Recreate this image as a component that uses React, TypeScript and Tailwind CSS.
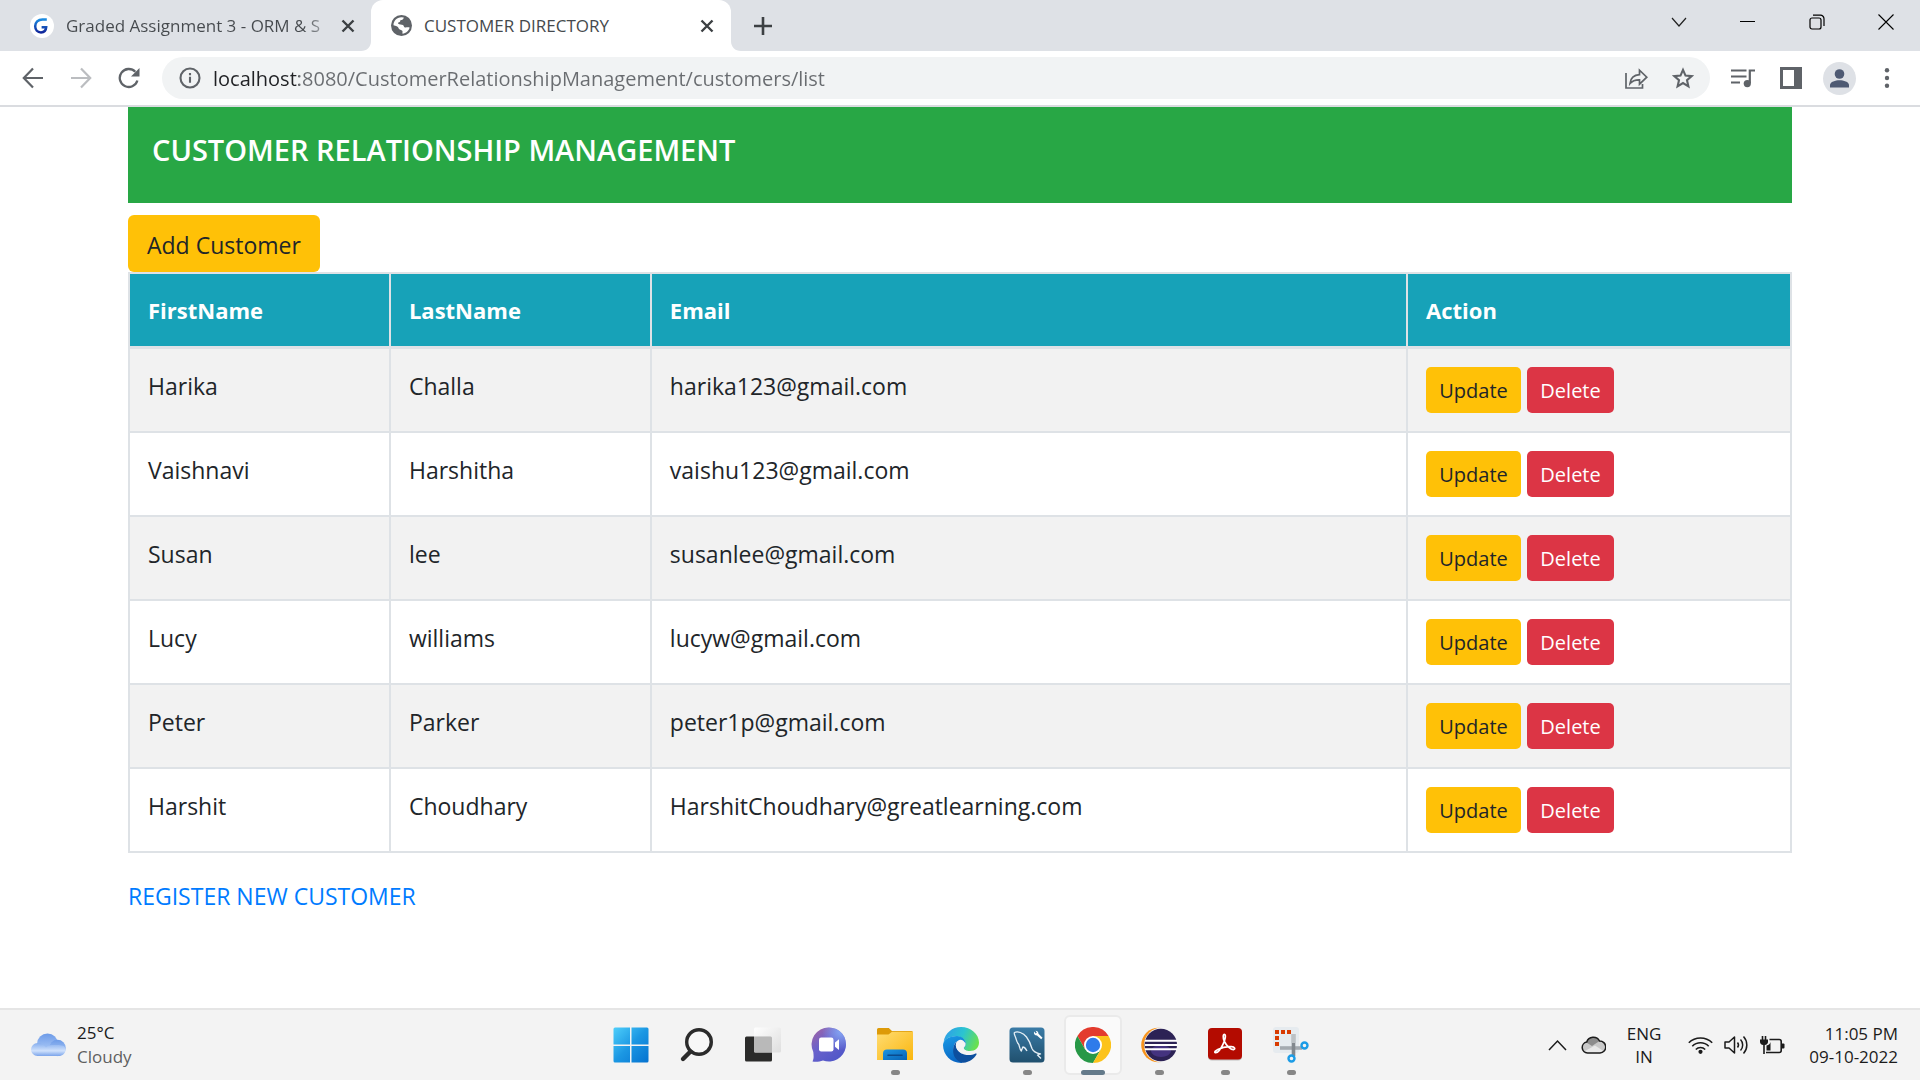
import type { ReactNode } from "react";

const customers = [
  { first: "Harika", last: "Challa", email: "harika123@gmail.com" },
  { first: "Vaishnavi", last: "Harshitha", email: "vaishu123@gmail.com" },
  { first: "Susan", last: "lee", email: "susanlee@gmail.com" },
  { first: "Lucy", last: "williams", email: "lucyw@gmail.com" },
  { first: "Peter", last: "Parker", email: "peter1p@gmail.com" },
  { first: "Harshit", last: "Choudhary", email: "HarshitChoudhary@greatlearning.com" },
];

function CloseX() {
  return (
    <svg className="size-4" viewBox="0 0 16 16" fill="none" stroke="#3c4043" strokeWidth="2.4">
      <path d="M2.5 2.5l11 11M13.5 2.5l-11 11" />
    </svg>
  );
}

function TabStrip() {
  return (
    <div className="flex h-[51px] bg-[#dee1e6]">
      <div className="flex w-[371px] items-center pl-[30px]">
        <svg className="size-6 shrink-0" viewBox="0 0 24 24">
          <circle cx="12" cy="12" r="12" fill="#fff" />
          <defs>
            <linearGradient id="gl" x1="0" y1="0" x2="0" y2="1">
              <stop offset="0" stopColor="#1b8ae0" />
              <stop offset="1" stopColor="#10269b" />
            </linearGradient>
          </defs>
          <path d="M16.8 5.4h-4.3C8 5.4 5.2 8.600 5.200 12.300c0 3.500 2.400 6.100 5.800 6.100 2.900 0 5-2 5.200-5.200h-4.600" fill="none" stroke="url(#gl)" strokeWidth="2.500" />
        </svg>
        <span className="ml-3 w-[264px] bg-[linear-gradient(90deg,#45494d_238px,transparent_270px)] bg-clip-text text-[17px] leading-6 whitespace-nowrap text-transparent">
          Graded Assignment 3 - ORM &amp; S
        </span>
        <button type="button" aria-label="Close tab" className="ml-[10px]">
          <CloseX />
        </button>
      </div>
      <div className="relative flex w-[360px] items-center rounded-t-[12px] bg-white pr-4 pl-5">
        <svg className="absolute bottom-0 -left-[10px] size-[10px]" viewBox="0 0 10 10">
          <path d="M10 0v10H0C6 10 10 6 10 0z" fill="#fff" />
        </svg>
        <svg className="absolute -right-[10px] bottom-0 size-[10px]" viewBox="0 0 10 10">
          <path d="M0 0v10h10C4 10 0 6 0 0z" fill="#fff" />
        </svg>
        <svg className="size-[21px]" viewBox="0 0 21 21">
          <circle cx="10.500" cy="10.500" r="10.500" fill="#5f6368" />
          <path d="M12.800 2.400c-.4 1.900-1.500 2.500-3.200 2.600-.6 1.300-.4 2.100-1.600 2.300-.9.200-1.200.8-.7 1.500.9 1.100 3.400.5 4.700 1.300 1.200.8.6 2.100 1.900 2.300 1.300.2 3.500-.4 4.700.2-.6 3.200-3.800 6-7 6.200-.6-1.200.6-2.400-.6-3.300-1.500-1-3.100-.8-3.500-2.600-.3-1.400-2.700-2.300-5-2.700C2.300 6.400 5.600 2.300 10.500 2.200z" fill="#fff" />
        </svg>
        <span className="ml-3 flex-1 text-[17px] leading-6 text-[#45494d]">CUSTOMER DIRECTORY</span>
        <button type="button" aria-label="Close tab">
          <CloseX />
        </button>
      </div>
      <button type="button" aria-label="New tab" className="ml-[22px]">
        <svg className="size-5" viewBox="0 0 20 20" stroke="#3c4043" strokeWidth="2.600">
          <path d="M10 1v18M1 10h18" />
        </svg>
      </button>
      <div className="ml-auto flex h-[43px] items-center">
        <button type="button" aria-label="Search tabs" className="flex w-[69px] justify-center">
          <svg className="h-4 w-4" viewBox="0 0 16 16" fill="none" stroke="#222" strokeWidth="1.200">
            <path d="M1 4l7 8 7-8" />
          </svg>
        </button>
        <button type="button" aria-label="Minimize" className="flex w-[69px] justify-center">
          <span className="h-px w-[15px] bg-black" />
        </button>
        <button type="button" aria-label="Restore" className="flex w-[69px] justify-center">
          <svg className="size-4" viewBox="0 0 16 16" fill="none" stroke="#000" strokeWidth="1.200">
            <rect x="1" y="4" width="11" height="11" rx="2" />
            <path d="M4 1.200h7.500a3.500 3.500 0 0 1 3.500 3.500V12" />
          </svg>
        </button>
        <button type="button" aria-label="Close window" className="flex w-[69px] justify-center">
          <svg className="size-4" viewBox="0 0 16 16" stroke="#000" strokeWidth="1.100">
            <path d="M.5.5l15 15M15.500.5l-15 15" />
          </svg>
        </button>
      </div>
    </div>
  );
}

function Toolbar() {
  return (
    <div className="flex h-14 items-center border-b-2 border-[#dadce0] bg-white pr-[23px] pl-[22px]">
      <button type="button" aria-label="Back">
        <svg className="size-[22px]" viewBox="0 0 22 22" fill="none" stroke="#5f6368" strokeWidth="2.200">
          <path d="M21 11H2M11 1.500L1.800 11l9.200 9.500" />
        </svg>
      </button>
      <button type="button" aria-label="Forward" className="ml-[26px]">
        <svg className="size-[22px]" viewBox="0 0 22 22" fill="none" stroke="#bbbdc0" strokeWidth="2.200">
          <path d="M1 11h19M11 1.500l9.200 9.500-9.200 9.500" />
        </svg>
      </button>
      <button type="button" aria-label="Reload" className="ml-[26px]">
        <svg className="size-[22px]" viewBox="0 0 22 22" fill="none" stroke="#5f6368" strokeWidth="2.300">
          <path d="M19.400 13.500A9 9 0 1 1 17.300 4.800" />
          <path d="M21.500 1v8.500H13z" fill="#5f6368" stroke="none" />
        </svg>
      </button>
      <div className="ml-[22px] flex h-[42px] flex-1 items-center rounded-full bg-[#f1f3f4] pr-4 pl-[17px]">
        <svg className="size-[22px] shrink-0" viewBox="0 0 22 22" fill="none" stroke="#5f6368" strokeWidth="2.100">
          <circle cx="11" cy="11" r="9.500" />
          <path d="M11 9.800v6M11 6v2.200" />
        </svg>
        <input
          type="text"
          aria-label="Address"
          defaultValue="localhost:8080/CustomerRelationshipManagement/customers/list"
          className="ml-3 min-w-0 flex-1 bg-[linear-gradient(90deg,#202124_86px,#696c70_86px)] bg-clip-text pt-0.5 text-xl text-transparent outline-none"
        />
        <button type="button" aria-label="Share this page">
          <svg className="size-6" viewBox="0 0 24 24" fill="none" stroke="#5f6368" strokeWidth="1.700">
            <path d="M2 7v15h16.500v-4" />
            <path d="M6 17.500c.6-5.500 4-8.500 9.500-8.800V4.200l7.300 7-7.300 7v-4.400c-4.300-.1-7.200 1-9.500 3.700z" />
          </svg>
        </button>
        <button type="button" aria-label="Bookmark this page" className="ml-6">
          <svg className="size-[22px]" viewBox="0 0 22 22" fill="none" stroke="#5f6368" strokeWidth="2.100">
            <path d="M11 2.800l2.500 5.800 6.200.5-4.700 4.100 1.400 6.200-5.400-3.300-5.400 3.300L7 13.200 2.300 9.100l6.200-.5z" />
          </svg>
        </button>
      </div>
      <button type="button" aria-label="Media controls" className="ml-[21px]">
        <svg className="h-5 w-6" viewBox="0 0 24 20" fill="none" stroke="#5f6368" strokeWidth="2.200">
          <path d="M0 2.500h15.500M0 8.500h15.500M0 14.500h9M18.800 15V2.500H24" />
          <circle cx="16.300" cy="15.600" r="3.600" fill="#5f6368" stroke="none" />
        </svg>
      </button>
      <button type="button" aria-label="Side panel" className="ml-[25px]">
        <svg className="size-[22px]" viewBox="0 0 22 22">
          <path d="M0 0h22v22H0z" fill="#5f6368" />
          <path d="M3 3h11v16H3z" fill="#fff" />
        </svg>
      </button>
      <button type="button" aria-label="Profile" className="ml-[21px]">
        <svg className="size-[33px]" viewBox="0 0 33 33">
          <circle cx="16.500" cy="16.500" r="16.500" fill="#dee1e6" />
          <circle cx="16.500" cy="12" r="4.800" fill="#4e5a73" />
          <path d="M7 25.500V23c0-3.200 5.500-4.800 9.500-4.800S26 19.800 26 23v2.500z" fill="#4e5a73" />
        </svg>
      </button>
      <button type="button" aria-label="Menu" className="ml-[21px]">
        <svg className="size-5" viewBox="0 0 20 20" fill="#5f6368">
          <circle cx="10" cy="2.200" r="2.200" />
          <circle cx="10" cy="10" r="2.200" />
          <circle cx="10" cy="17.800" r="2.200" />
        </svg>
      </button>
    </div>
  );
}

function CustomerTable() {
  return (
    <table className="w-full table-fixed border-collapse border-2 border-[#dee2e6] text-left text-[23px] leading-9 text-[#212529]">
      <colgroup>
        <col className="w-[15.7%]" />
        <col className="w-[15.7%]" />
        <col className="w-[45.5%]" />
        <col className="w-[23.1%]" />
      </colgroup>
      <thead className="bg-[#17a2b8] text-[22px] text-white">
        <tr>
          {["FirstName", "LastName", "Email", "Action"].map((h) => (
            <th key={h} scope="col" className="border-2 border-b-3 border-[#dee2e6] px-[18px] py-[18px] font-bold">
              {h}
            </th>
          ))}
        </tr>
      </thead>
      <tbody>
        {customers.map((c) => (
          <tr key={c.email} className="align-top odd:bg-[#f2f2f2]">
            <td className="border-2 border-[#dee2e6] px-[18px] pt-[19px]">{c.first}</td>
            <td className="border-2 border-[#dee2e6] px-[18px] pt-[19px]">{c.last}</td>
            <td className="border-2 border-[#dee2e6] px-[18px] pt-[19px]">{c.email}</td>
            <td className="border-2 border-[#dee2e6] p-[18px]">
              <div className="flex gap-1.5 text-xl">
                <button type="button" className="flex h-[46px] w-[95px] items-center justify-center rounded-[5px] bg-[#ffc107] pt-0.5">
                  Update
                </button>
                <button type="button" className="flex h-[46px] w-[87px] items-center justify-center rounded-[5px] bg-[#dc3545] pt-0.5 text-white">
                  Delete
                </button>
              </div>
            </td>
          </tr>
        ))}
      </tbody>
    </table>
  );
}

function StartIcon() {
  return (
    <svg className="size-9" viewBox="0 0 36 36">
      <defs>
        <linearGradient id="win" gradientUnits="userSpaceOnUse" x1="0" y1="0" x2="36" y2="36">
          <stop offset="0" stopColor="#4fd0fb" />
          <stop offset=".5" stopColor="#1b97e3" />
          <stop offset="1" stopColor="#0471cf" />
        </linearGradient>
      </defs>
      <path d="M2 .5h15v17H.5V2A1.500 1.500 0 0 1 2 .5zM18.500.5H34A1.500 1.500 0 0 1 35.500 2v15.500h-17zM.5 19h16.500v16.500H2A1.500 1.500 0 0 1 .5 34zM18.500 19h17v15a1.500 1.500 0 0 1-1.500 1.500H18.500z" fill="url(#win)" />
    </svg>
  );
}

function SearchIcon() {
  return (
    <svg className="size-9" viewBox="0 0 36 36" fill="none" stroke="#2b2b2b">
      <circle cx="20" cy="15" r="12.300" strokeWidth="3.400" fill="#f7f7f7" />
      <path d="M11.500 24.500L4 32" strokeWidth="4.400" strokeLinecap="round" />
    </svg>
  );
}

function TaskViewIcon() {
  return (
    <svg className="size-9" viewBox="0 0 36 36">
      <defs>
        <linearGradient id="tv" x1="0" y1="0" x2="1" y2="1">
          <stop offset="0" stopColor="#fff" stopOpacity=".95" />
          <stop offset="1" stopColor="#dcdcdc" stopOpacity=".9" />
        </linearGradient>
      </defs>
      <rect x="0" y="9.500" width="27" height="25" rx="1.500" fill="#2b2b2a" />
      <rect x="9" y=".5" width="27" height="25" rx="1.500" fill="url(#tv)" />
      <path d="M9 9.500h16.500a1.500 1.500 0 0 1 1.500 1.500v14.500H10.500A1.500 1.500 0 0 1 9 24z" fill="#b9b9b9" />
    </svg>
  );
}

function ChatIcon() {
  return (
    <svg className="size-9" viewBox="0 0 36 36">
      <defs>
        <linearGradient id="chat" x1="0" y1="0" x2=".8" y2="1">
          <stop offset="0" stopColor="#a8649f" />
          <stop offset=".45" stopColor="#6a62cb" />
          <stop offset="1" stopColor="#4d55c8" />
        </linearGradient>
        <radialGradient id="chatHi" cx=".85" cy=".12" r=".55">
          <stop offset="0" stopColor="#84a6f4" />
          <stop offset="1" stopColor="#84a6f4" stopOpacity="0" />
        </radialGradient>
      </defs>
      <path d="M18 .5a17 17 0 1 1-6 32.900C9 34.500 5 35.400 1.500 34.500c1.300-2.500 1.300-4.500.8-9.500A17 17 0 0 1 18 .5z" fill="url(#chat)" />
      <path d="M18 .5a17 17 0 1 1-6 32.900C9 34.500 5 35.400 1.500 34.500c1.300-2.500 1.300-4.500.8-9.500A17 17 0 0 1 18 .5z" fill="url(#chatHi)" />
      <rect x="8" y="10.500" width="14.500" height="14" rx="2.200" fill="#fff" />
      <path d="M24 15.500l4-3.200v10.600l-4-3.200z" fill="#fff" />
    </svg>
  );
}

function FolderIcon() {
  return (
    <svg className="size-9" viewBox="0 0 36 36">
      <defs>
        <linearGradient id="fold" x1="0" y1="0" x2="1" y2="1">
          <stop offset="0" stopColor="#ffdc72" />
          <stop offset="1" stopColor="#fab60e" />
        </linearGradient>
        <linearGradient id="foldB" x1="0" y1="0" x2="1" y2="1">
          <stop offset="0" stopColor="#1c95e2" />
          <stop offset="1" stopColor="#0762b5" />
        </linearGradient>
      </defs>
      <path d="M0 2.500A1.500 1.500 0 0 1 1.500 1h10.300L15 4h19.500A1.500 1.500 0 0 1 36 5.500V10H0z" fill="#dd9a08" />
      <path d="M0 7.500h11.500L15 4.800h21V33H0z" fill="url(#fold)" />
      <path d="M6 33v-6.500a4 4 0 0 1 4-4h16a4 4 0 0 1 4 4V33z" fill="url(#foldB)" />
      <path d="M11 28.200h14" stroke="#0b4a8c" strokeWidth="1.600" strokeLinecap="round" />
    </svg>
  );
}

function EdgeIcon() {
  return (
    <svg className="size-9" viewBox="0 0 36 36">
      <defs>
        <linearGradient id="e1" x1="0" y1=".3" x2="1" y2=".6">
          <stop offset="0" stopColor="#2f9fe8" />
          <stop offset=".5" stopColor="#2bc4d0" />
          <stop offset="1" stopColor="#6be14b" />
        </linearGradient>
        <linearGradient id="e2" x1="0" y1="0" x2=".3" y2="1">
          <stop offset="0" stopColor="#1a9be6" />
          <stop offset="1" stopColor="#0a67c4" />
        </linearGradient>
      </defs>
      <path d="M.6 15C2 6 9.200 0 18 0c10 0 18 7.200 18 15.500 0 5-3.700 8.500-9 8.500-4 0-6.300-1.500-6.300-2.700 0-.9 1.900-1.700 1.900-4.800 0-3.600-3.800-7.300-9-7.300C7.500 9.200 3 11.500.6 15z" fill="url(#e1)" />
      <path d="M14 9c5 0 8.700 3.700 8.700 7.500 0 3-1.800 4-1.900 4.800l-6.600-7C8 17.500 10 31 20 35.900 9 37 0 28.500 0 18 .5 12.500 6 9 14 9z" fill="url(#e2)" />
      <path d="M14.600 13.900C7.500 18.500 8.500 34 20.500 35.800c6-.8 10.500-3.900 13-8.300.4-.8-.2-1.300-1-.9C24.500 30.500 14 26.500 12.900 19c-.2-2 .5-3.800 1.700-5.100z" fill="#0d4f9e" />
      <path d="M14.600 13.900c-1.200 1.300-1.900 3.100-1.700 5.100.5 3.200 2.600 5.800 5.600 7.500 1.500-1 3-1.800 4.500-2.900-1.500-.7-2.300-1.500-2.300-2.300 0-.9 1.900-1.700 1.900-4.800-2-4-5.500-4.800-8-2.600z" fill="#f3f3f3" />
    </svg>
  );
}

function WorkbenchIcon() {
  return (
    <svg className="size-9" viewBox="0 0 36 36">
      <defs>
        <linearGradient id="wb" x1="0" y1="0" x2="0" y2="1">
          <stop offset="0" stopColor="#3a7ba6" />
          <stop offset="1" stopColor="#20506e" />
        </linearGradient>
      </defs>
      <rect x=".5" y=".5" width="35" height="35" rx="3.500" fill="url(#wb)" />
      <path d="M5.500 5.500c3-1.500 8.500 0 12 4.500 2.700 3.500 4.300 7.500 5.500 11.500 1 2.500 3 4.300 8.500 5.500l-3 1 3.500 3.500M5.500 5.500c-1 1 .6 3 1.300 5.500.7 2.400 1 4.600 3 6.500.8 2.400 1 5 2.500 6.500l1.500-4c1.500 0 3.200 2 4.200 4" fill="none" stroke="#e4eef5" strokeWidth="1.300" strokeLinejoin="round" />
      <path d="M25 4.500c-.5 2.500.8 4 3 4l4.200 3.700 1.300-1.500-4-4c0-1.700-1.300-3-3-3l1.300 1.800-1 1z" fill="#fff" />
    </svg>
  );
}

function ChromeIcon() {
  return (
    <svg className="size-9" viewBox="0 0 36 36">
      <path d="M18 9h15.600A18 18 0 0 0 2.400 9l7.800 13.500z" fill="#e33b2e" />
      <path d="M2.400 9l7.800 13.500h15.600L18 36A18 18 0 0 1 2.400 9z" fill="#279847" />
      <path d="M25.800 22.500L18 36A18 18 0 0 0 33.600 9H18z" fill="#fcc31b" />
      <circle cx="18" cy="18" r="9" fill="#fff" />
      <circle cx="18" cy="18" r="7.200" fill="#2f7bea" />
    </svg>
  );
}

function EclipseIcon() {
  return (
    <svg className="size-9" viewBox="0 0 36 36">
      <circle cx="17.500" cy="18" r="17.300" fill="#f7941e" />
      <circle cx="20.500" cy="18" r="17.400" fill="#f3f3f3" />
      <circle cx="19.800" cy="18" r="16.200" fill="#2c2255" />
      <ellipse cx="20" cy="24" rx="10" ry="6" fill="#44337f" />
      <path d="M4 13.800h32M4 18h32M4 22.200h32" stroke="#fff" strokeWidth="1.900" />
    </svg>
  );
}

function AcrobatIcon() {
  return (
    <svg className="size-9" viewBox="0 0 36 36">
      <rect x="1" y="2" width="34" height="31.500" rx="4" fill="#8e8e8e" opacity=".5" />
      <rect x="1" y="1" width="34" height="31.500" rx="4" fill="#b30b00" />
      <path d="M8 25.500c2.500 1 6-3.800 8.300-8.800 1.700-3.700 2.900-8.700 1.400-9.200-1.700-.5-2 3.200-.4 6.700 2 4.500 6.200 8.500 9.200 8.400 2-.2 1.600-2.600-2.200-2.900-4.500-.3-9.800.9-13.500 2.700-2 1-3.500 2.600-2.800 3.100z" fill="none" stroke="#fff" strokeWidth="1.700" strokeLinejoin="round" />
    </svg>
  );
}

function SnipIcon() {
  return (
    <svg className="size-9" viewBox="0 0 36 36">
      <rect x="0" y="0" width="26" height="26" rx="3" fill="#e6ebef" />
      <path d="M2 3h4v4H2zM8 3h4v4H8zM14 3h4v4h-4zM2 9h4v4H2zM2 15h4v4H2z" fill="#d83b01" />
      <path d="M7 21h22" stroke="#a4aab0" strokeWidth="3.600" />
      <path d="M20.500 7v22" stroke="#82888e" strokeWidth="3.600" />
      <path d="M20.500 7v9" stroke="#bcc1c5" strokeWidth="3.600" />
      <circle cx="31.500" cy="18.500" r="3" fill="none" stroke="#1c9ce6" strokeWidth="2.400" />
      <circle cx="18.500" cy="31.500" r="3" fill="none" stroke="#1c9ce6" strokeWidth="2.400" />
    </svg>
  );
}

const apps: { name: string; icon: ReactNode; state: "idle" | "open" | "active" }[] = [
  { name: "Start", icon: <StartIcon />, state: "idle" },
  { name: "Search", icon: <SearchIcon />, state: "idle" },
  { name: "Task view", icon: <TaskViewIcon />, state: "idle" },
  { name: "Chat", icon: <ChatIcon />, state: "idle" },
  { name: "File Explorer", icon: <FolderIcon />, state: "open" },
  { name: "Edge", icon: <EdgeIcon />, state: "idle" },
  { name: "MySQL Workbench", icon: <WorkbenchIcon />, state: "open" },
  { name: "Chrome", icon: <ChromeIcon />, state: "active" },
  { name: "Eclipse", icon: <EclipseIcon />, state: "open" },
  { name: "Acrobat", icon: <AcrobatIcon />, state: "open" },
  { name: "Snipping Tool", icon: <SnipIcon />, state: "open" },
];

function Taskbar() {
  return (
    <footer className="grid h-[72px] shrink-0 grid-cols-[1fr_auto_1fr] items-center border-t-2 border-[#e5e5e5] bg-[#f3f3f3] text-[17px] leading-6 text-[#1b1b1b]">
      <div className="flex items-center pl-[30px]">
        <svg className="h-6 w-9" viewBox="0 0 36 24">
          <defs>
            <linearGradient id="cl" x1="0" y1="0" x2="0" y2="1">
              <stop offset="0" stopColor="#6d9be8" />
              <stop offset="1" stopColor="#b9d3fa" />
            </linearGradient>
            <linearGradient id="cl2" x1="0" y1="0" x2="0" y2="1">
              <stop offset="0" stopColor="#86aeee" />
              <stop offset=".6" stopColor="#cfe1fc" />
              <stop offset="1" stopColor="#7ba4ea" />
            </linearGradient>
          </defs>
          <circle cx="17.500" cy="11" r="10.500" fill="url(#cl)" />
          <circle cx="27.500" cy="15" r="8.300" fill="url(#cl)" />
          <path d="M7.500 10c4 0 6.500 2 8.500 4.500 1.500-1.500 3-2.500 6-2.500 6 0 13.500-1 13.500 4.500 0 4-3 6.500-7 6.500h-21a6.500 6.500 0 0 1 0-13z" fill="url(#cl2)" />
        </svg>
        <div className="ml-[11px]">
          <p>25°C</p>
          <p className="text-[#5f5f5f]">Cloudy</p>
        </div>
      </div>
      <nav aria-label="Taskbar" className="flex gap-2 pl-0.5">
        {apps.map((a) => (
          <button
            key={a.name}
            type="button"
            aria-label={a.name}
            className={
              a.state === "active"
                ? "relative flex h-[60px] w-[58px] items-center justify-center rounded-md border-2 border-[#eaeaea] bg-[#fafafa]"
                : "relative flex h-[60px] w-[58px] items-center justify-center"
            }
          >
            {a.icon}
            {a.state === "open" && <span className="absolute bottom-0 h-[5px] w-[9px] rounded-full bg-[#868686]" />}
            {a.state === "active" && <span className="absolute -bottom-0.5 h-[5px] w-6 rounded-full bg-[#647a8a]" />}
          </button>
        ))}
      </nav>
      <div className="flex items-center justify-end pr-[22px]">
        <button type="button" aria-label="Show hidden icons">
          <svg className="h-3 w-[19px]" viewBox="0 0 19 12" fill="none" stroke="#1b1b1b" strokeWidth="1.500">
            <path d="M1 11l8.500-9 8.500 9" />
          </svg>
        </button>
        <svg className="ml-[14px] h-[18px] w-[25px]" viewBox="0 0 25 18">
          <path d="M6.500 17a5.500 5.500 0 0 1-.8-10.900A7 7 0 0 1 18.500 5 6 6 0 0 1 19 17z" fill="#c9c9c9" />
          <path d="M5.500 6.500A7 7 0 0 1 18.500 5L11 10z" fill="#8c8c8c" />
          <path d="M3 15.500L14 9.500l8.500 5.500-3 2H6.500z" fill="#e8e8e8" />
          <path d="M6.500 17a5.500 5.500 0 0 1-.8-10.900A7 7 0 0 1 18.500 5 6 6 0 0 1 19 17z" fill="none" stroke="#1b1b1b" strokeWidth="1.500" />
        </svg>
        <p className="ml-[21px] text-center leading-[23px]">
          ENG
          <br />
          IN
        </p>
        <svg className="ml-[27px] h-[18px] w-[25px]" viewBox="0 0 25 18" fill="none" stroke="#1b1b1b" strokeWidth="1.600">
          <path d="M.8 6.800a16.500 16.500 0 0 1 23.400 0M4.300 10.200a11.500 11.500 0 0 1 16.400 0M7.800 13.500a6.700 6.700 0 0 1 9.400 0" />
          <circle cx="12.500" cy="15.800" r="2.100" fill="#1b1b1b" stroke="none" />
        </svg>
        <svg className="ml-[11px] h-5 w-[25px]" viewBox="0 0 25 20" fill="none" stroke="#1b1b1b" strokeWidth="1.500" strokeLinejoin="round">
          <path d="M1 7h4l5.500-5v16L5 13H1z" />
          <path d="M13.500 7.500a4 4 0 0 1 0 5M16.500 4.500a8 8 0 0 1 0 11M19.500 1.500a12.500 12.500 0 0 1 0 17" />
        </svg>
        <svg className="ml-[11px] h-[18px] w-[25px]" viewBox="0 0 25 18" fill="none" stroke="#1b1b1b" strokeWidth="1.600">
          <path d="M9.500 3.500h9.700a2 2 0 0 1 2 2v9a2 2 0 0 1-2 2H6" />
          <path d="M22 7.500h1.500a1 1 0 0 1 1 1v3a1 1 0 0 1-1 1H22z" fill="#1b1b1b" stroke="none" />
          <path d="M0 3.500h1.700V0h1.600v3.500h1.400V0h1.600v3.500H8V6c0 1.600-1.300 2.800-3.200 3v9H3.200V9C1.300 8.800 0 7.600 0 6z" fill="#1b1b1b" stroke="none" />
          <path d="M6.500 9.500c2.500-.5 3.500-1.500 4-3.500v8.500h-4z" fill="#1b1b1b" stroke="none" />
        </svg>
        <p className="ml-6 text-right leading-[23px]">
          11:05 PM
          <br />
          09-10-2022
        </p>
      </div>
    </footer>
  );
}

export default function App() {
  return (
    <div className="flex min-h-screen flex-col bg-white font-['Open_Sans',sans-serif]">
      <header>
        <TabStrip />
        <Toolbar />
      </header>
      <main className="flex flex-1 flex-col items-start px-32">
        <div className="w-full bg-[#28a745] px-6 pt-[25px] pb-[35px]">
          <h1 className="text-[29px] leading-9 font-semibold text-white">CUSTOMER RELATIONSHIP MANAGEMENT</h1>
        </div>
        <button type="button" className="mt-3 h-[57px] rounded-md bg-[#ffc107] px-[19px] pt-1 text-[23px] text-[#212529]">
          Add Customer
        </button>
        <CustomerTable />
        <a href="#register" className="mt-[25px] text-[23px] leading-9 text-[#007bff]">
          REGISTER NEW CUSTOMER
        </a>
      </main>
      <Taskbar />
    </div>
  );
}
